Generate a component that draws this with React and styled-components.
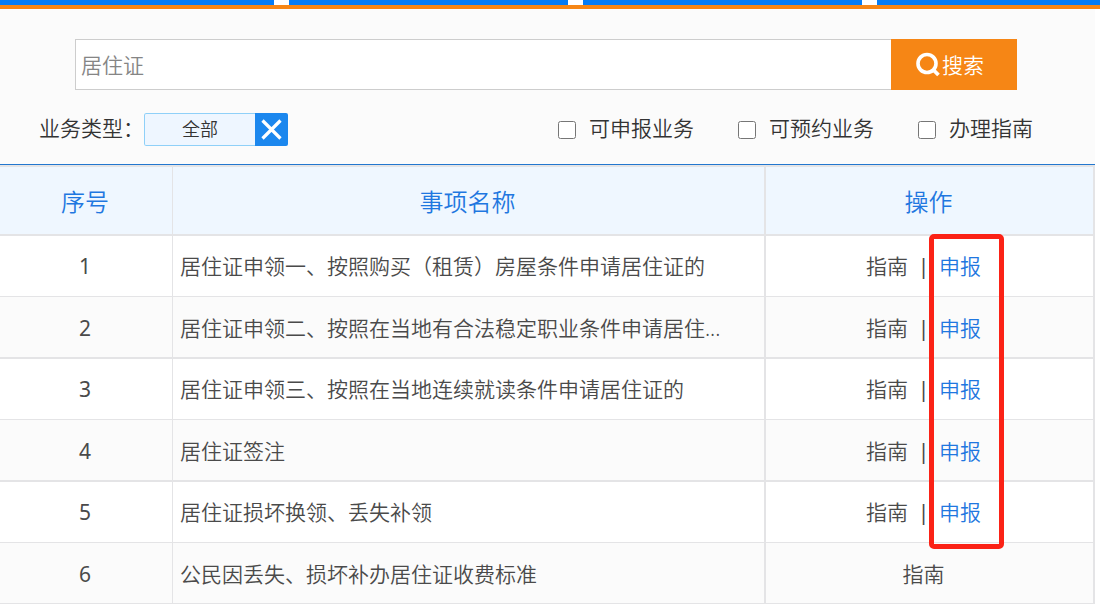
import React, { useState } from 'react';
import styled, { createGlobalStyle } from 'styled-components';

const GlobalStyle = createGlobalStyle`
  * {
    box-sizing: border-box;
  }

  body {
    margin: 0;
    background: #fff;
    color: #333;
    font-family: 'Noto Sans', 'Noto Sans CJK SC', sans-serif;
    font-size: 21px;
    font-weight: 350;
    line-height: 30px;
  }

  button,
  input {
    font: inherit;
  }
`;

const NavBar = styled.nav`
  display: grid;
  grid-template-columns: 274fr 279fr 279fr 223fr;
  gap: 15px;
  border-bottom: 4px solid #f68615;
`;

const NavTab = styled.span`
  height: 5px;
  background: #047cf6;
`;

const Panel = styled.main`
  margin-right: 5px;
  background: #fbfbfb;
`;

const SearchForm = styled.form`
  display: flex;
  height: 81px;
  padding: 30px 78px 0 75px;
`;

const SearchInput = styled.input`
  flex: 1;
  min-width: 0;
  padding: 0 5px;
  border: 1px solid #cdcdcd;
  border-right: 0;
  border-radius: 0;
  background: #fff;
  color: #858585;
  outline: none;
`;

const SearchButton = styled.button`
  display: flex;
  align-items: center;
  justify-content: center;
  width: 126px;
  padding: 0 8px 0 0;
  border: 0;
  background: #f68615;
  color: #fff;
  cursor: pointer;
`;

const Filters = styled.div`
  display: flex;
  align-items: flex-start;
  justify-content: space-between;
  padding: 23px 62px 18px 39px;
`;

const FilterGroup = styled.div`
  display: flex;
  align-items: flex-start;
  gap: ${({ $gap }) => $gap || 0}px;
`;

const Chip = styled.span`
  display: flex;
  width: 144px;
  height: 33px;
  border-radius: 2px;
  overflow: hidden;
`;

const ChipText = styled.span`
  flex: 1;
  border: 1px solid #8fd0f8;
  border-right: 0;
  border-radius: 2px 0 0 2px;
  background: #eef6ff;
  font-size: 18px;
  text-align: center;
`;

const ChipClose = styled.button`
  display: flex;
  align-items: center;
  justify-content: center;
  width: 33px;
  padding: 0;
  border: 0;
  background: #1b87ee;
  cursor: pointer;
`;

const CheckLabel = styled.label`
  display: flex;
  align-items: center;
  gap: 13px;
`;

const Checkbox = styled.input`
  width: 18px;
  height: 18px;
  margin: 4px 0 0;
`;

const TableWrap = styled.div`
  position: relative;
  border-top: 1px solid #2277cf;
`;

const Table = styled.table`
  width: 100%;
  table-layout: fixed;
  border-collapse: separate;
  border-spacing: 0;
  color: #4a4a4a;
`;

const HeadCell = styled.th`
  width: ${({ $width }) => $width || 'auto'};
  height: 71px;
  padding: 2px 2px 0 0;
  border: solid #e4e4e6;
  border-width: 2px ${({ $line }) => $line}px 2px 0;
  background: #eff7ff;
  color: #1f77e0;
  font-size: 24px;
  font-weight: 350;
`;

const Row = styled.tr`
  td {
    height: 61px;
    border-bottom: 1px solid #e4e4e6;
    background: #fff;
  }

  &:nth-child(even) td {
    height: 62px;
    padding-top: 2px;
    border-bottom-width: 2px;
    background: #fbfbfb;
  }

  &:last-child td {
    height: 61px;
    border-bottom-width: 1px;
  }
`;

const Cell = styled.td`
  padding: ${({ $pad }) => $pad};
  border-right: ${({ $line }) => $line}px solid #e4e4e6;
  font-weight: ${({ $weight }) => $weight || 350};
  text-align: ${({ $align }) => $align || 'center'};
  white-space: nowrap;
  overflow: hidden;
  text-overflow: ellipsis;
`;

const Actions = styled.div`
  display: flex;
  justify-content: center;
`;

const ActionLink = styled.a`
  color: ${({ $primary }) => ($primary ? '#1f77e0' : 'inherit')};
  text-decoration: none;
`;

const Divider = styled.span`
  width: 31px;
  font-weight: 400;
  text-align: center;
`;

// red frame drawn over the apply links
const Highlight = styled.div`
  position: absolute;
  top: 69px;
  right: 91px;
  bottom: 55px;
  width: 75px;
  border: 5px solid #fb2216;
  border-radius: 5px;
  pointer-events: none;
`;

const SearchIcon = () => (
  <svg width='26' height='26' viewBox='0 0 26 26' fill='none' stroke='#fff'>
    <circle cx='11' cy='11.5' r='9' strokeWidth='3.6' />
    <path d='M17 17.5L22.5 23' strokeWidth='3.8' />
  </svg>
);

const CloseIcon = () => (
  <svg width='21' height='21' viewBox='0 0 21 21' stroke='#fff' strokeWidth='3.2'>
    <path d='M1.5 1.5L19.5 19.5M19.5 1.5L1.5 19.5' />
  </svg>
);

const options = ['可申报业务', '可预约业务', '办理指南'];

const items = [
  { name: '居住证申领一、按照购买（租赁）房屋条件申请居住证的', apply: true },
  { name: '居住证申领二、按照在当地有合法稳定职业条件申请居住...', apply: true },
  { name: '居住证申领三、按照在当地连续就读条件申请居住证的', apply: true },
  { name: '居住证签注', apply: true },
  { name: '居住证损坏换领、丢失补领', apply: true },
  { name: '公民因丢失、损坏补办居住证收费标准', apply: false }
];

const App = () => {
  const [search, setSearch] = useState('居住证');

  // Handle Submit
  const handleSubmit = e => e.preventDefault();

  return (
    <>
      <GlobalStyle />
      <NavBar>
        <NavTab />
        <NavTab />
        <NavTab />
        <NavTab />
      </NavBar>
      <Panel>
        <SearchForm onSubmit={handleSubmit}>
          <SearchInput
            type='text'
            name='search'
            aria-label='搜索'
            value={search}
            onChange={e => setSearch(e.target.value)}
          />
          <SearchButton type='submit'>
            <SearchIcon />
            搜索
          </SearchButton>
        </SearchForm>
        <Filters>
          <FilterGroup>
            业务类型：
            <Chip>
              <ChipText>全部</ChipText>
              <ChipClose type='button' aria-label='清除'>
                <CloseIcon />
              </ChipClose>
            </Chip>
          </FilterGroup>
          <FilterGroup $gap={44}>
            {options.map(option => (
              <CheckLabel key={option}>
                <Checkbox type='checkbox' />
                {option}
              </CheckLabel>
            ))}
          </FilterGroup>
        </Filters>
        <TableWrap>
          <Table>
            <thead>
              <tr>
                <HeadCell $width='173px' $line={1}>序号</HeadCell>
                <HeadCell $line={2}>事项名称</HeadCell>
                <HeadCell $width='329px' $line={2}>操作</HeadCell>
              </tr>
            </thead>
            <tbody>
              {items.map((item, index) => (
                <Row key={item.name}>
                  <Cell $pad='0 2px 0 0' $line={1} $weight={400}>
                    {index + 1}
                  </Cell>
                  <Cell $pad='0 7px' $line={2} $align='left'>
                    {item.name}
                  </Cell>
                  <Cell $pad='0 12px 0 0' $line={2}>
                    <Actions>
                      <ActionLink href='#guide'>指南</ActionLink>
                      {item.apply && (
                        <>
                          <Divider>|</Divider>
                          <ActionLink href='#apply' $primary>
                            申报
                          </ActionLink>
                        </>
                      )}
                    </Actions>
                  </Cell>
                </Row>
              ))}
            </tbody>
          </Table>
          <Highlight />
        </TableWrap>
      </Panel>
    </>
  );
};

export default App;
